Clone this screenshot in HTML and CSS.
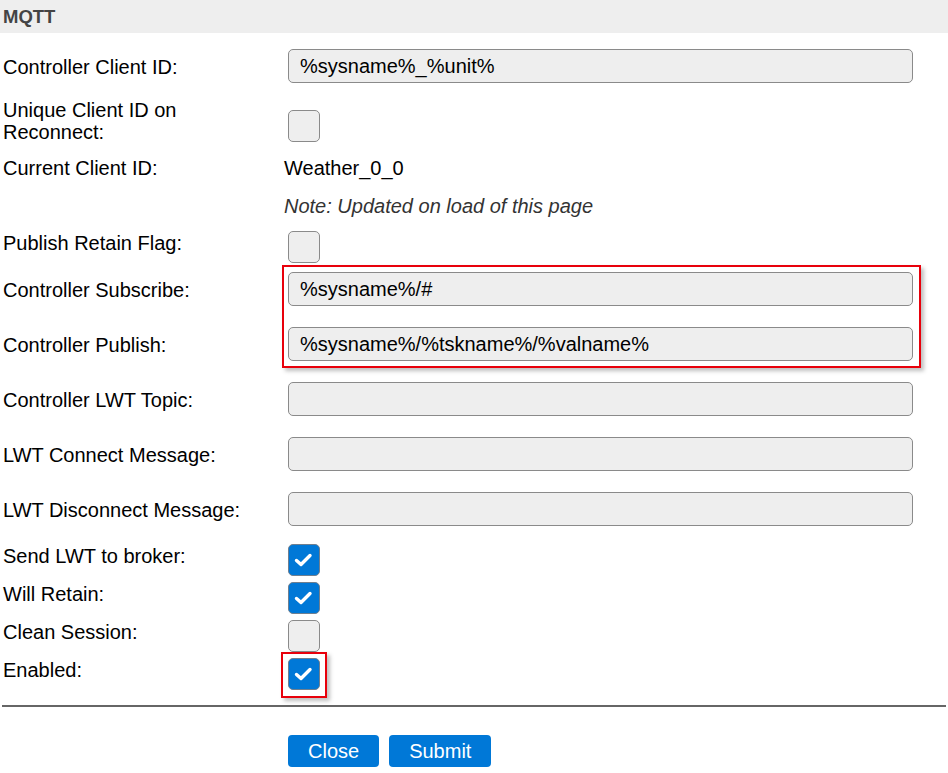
FILE: index.html
```html
<!DOCTYPE html>
<html>
<head>
<meta charset="utf-8">
<link rel="stylesheet" href="styles.css">
</head>
<body>
<div class="page">
  <div class="header">MQTT</div>
  <div class="form">
    <div class="row row-input">
      <div class="label">Controller Client ID:</div>
      <div class="field"><div class="input">%sysname%_%unit%</div></div>
    </div>
    <div class="row row-unique">
      <div class="label">Unique Client ID on<br>Reconnect:</div>
      <div class="field"><div class="cb"></div></div>
    </div>
    <div class="row row-text">
      <div class="label">Current Client ID:</div>
      <div class="field">Weather_0_0</div>
    </div>
    <div class="row row-note">
      <div class="label"></div>
      <div class="field note">Note: Updated on load of this page</div>
    </div>
    <div class="row row-cb">
      <div class="label">Publish Retain Flag:</div>
      <div class="field"><div class="cb"></div></div>
    </div>
    <div class="row row-input">
      <div class="label">Controller Subscribe:</div>
      <div class="field"><div class="input">%sysname%/#</div></div>
    </div>
    <div class="row row-input">
      <div class="label">Controller Publish:</div>
      <div class="field"><div class="input">%sysname%/%tskname%/%valname%</div></div>
    </div>
    <div class="row row-input">
      <div class="label">Controller LWT Topic:</div>
      <div class="field"><div class="input"></div></div>
    </div>
    <div class="row row-input">
      <div class="label">LWT Connect Message:</div>
      <div class="field"><div class="input"></div></div>
    </div>
    <div class="row row-input">
      <div class="label">LWT Disconnect Message:</div>
      <div class="field"><div class="input"></div></div>
    </div>
    <div class="row row-cb">
      <div class="label">Send LWT to broker:</div>
      <div class="field"><div class="cb checked"><svg viewBox="0 0 32 32" width="32" height="32"><polyline points="8.5,16.5 13,20.5 22,11.5" fill="none" stroke="#fff" stroke-width="3.4" stroke-linecap="round" stroke-linejoin="round"/></svg></div></div>
    </div>
    <div class="row row-cb">
      <div class="label">Will Retain:</div>
      <div class="field"><div class="cb checked"><svg viewBox="0 0 32 32" width="32" height="32"><polyline points="8.5,16.5 13,20.5 22,11.5" fill="none" stroke="#fff" stroke-width="3.4" stroke-linecap="round" stroke-linejoin="round"/></svg></div></div>
    </div>
    <div class="row row-cb">
      <div class="label">Clean Session:</div>
      <div class="field"><div class="cb"></div></div>
    </div>
    <div class="row row-cb">
      <div class="label">Enabled:</div>
      <div class="field"><div class="cb checked"><svg viewBox="0 0 32 32" width="32" height="32"><polyline points="8.5,16.5 13,20.5 22,11.5" fill="none" stroke="#fff" stroke-width="3.4" stroke-linecap="round" stroke-linejoin="round"/></svg></div></div>
    </div>
    <div class="mark mark-topics"></div>
    <div class="mark mark-enabled"></div>
  </div>
  <hr class="rule">
  <div class="buttons">
    <div class="btn">Close</div>
    <div class="btn">Submit</div>
  </div>
</div>
</body>
</html>
```
FILE: styles.css
```css
html, body {
  margin: 0;
  padding: 0;
  background: #fff;
}
body {
  font-family: "Liberation Sans", Arial, sans-serif;
  font-size: 20px;
  line-height: 22px;
  color: #000;
}
.page {
  width: 948px;
}
.header {
  height: 33px;
  background: #eee;
  color: #444;
  font-weight: bold;
  font-size: 18.5px;
  line-height: 34px;
  padding-left: 3px;
}
.form {
  position: relative;
  margin-top: 7px;
}
.row {
  display: flex;
  align-items: flex-start;
}
.label {
  width: 281px;
  flex: none;
  padding-left: 3px;
}
.field {
  flex: 1;
}
.row-input {
  height: 55px;
}
.row-input .label {
  padding-top: 16px;
}
.row-input .input {
  margin-top: 9px;
}
.input {
  box-sizing: border-box;
  margin-left: 4px;
  width: 625px;
  height: 34px;
  border: 1px solid #8a8a8a;
  border-radius: 5px;
  background: #eee;
  padding-left: 11px;
  line-height: 33px;
}
.row-unique {
  height: 55px;
}
.row-unique .label {
  padding-top: 4px;
}
.row-unique .cb {
  margin-top: 15px;
}
.row-text {
  height: 37px;
  padding-top: 7px;
  box-sizing: border-box;
}
.row-note {
  height: 38px;
  padding-top: 8px;
  box-sizing: border-box;
}
.note {
  font-style: italic;
  color: #333;
}
.row-cb {
  height: 38px;
  padding-top: 6px;
  box-sizing: border-box;
}
.row-cb .label {
  padding-top: 1px;
}
.cb {
  box-sizing: border-box;
  margin-left: 4px;
  width: 32px;
  height: 32px;
  border: 1px solid #8a8a8a;
  border-radius: 5px;
  background: #eee;
  overflow: hidden;
}
.cb.checked {
  background: #0078d7;
  border-color: #6f7f8f;
}
.cb svg {
  display: block;
  margin: -1px 0 0 -1px;
}
.mark {
  position: absolute;
  border: 2px solid #e8000b;
  box-shadow: 3px 3px 4px rgba(0, 0, 0, 0.25);
}
.mark-topics {
  left: 282px;
  top: 225px;
  width: 635px;
  height: 99px;
}
.mark-enabled {
  left: 281px;
  top: 612px;
  width: 42px;
  height: 42px;
}
.rule {
  margin: 15px 2px 0 2px;
  border: 0;
  border-top: 2px solid #666;
  height: 0;
}
.buttons {
  display: flex;
  gap: 10px;
  padding-left: 288px;
  margin-top: 28px;
}
.btn {
  height: 32px;
  line-height: 33px;
  padding: 0 20px;
  background: #0078d7;
  color: #fff;
  border-radius: 4px;
}
```
